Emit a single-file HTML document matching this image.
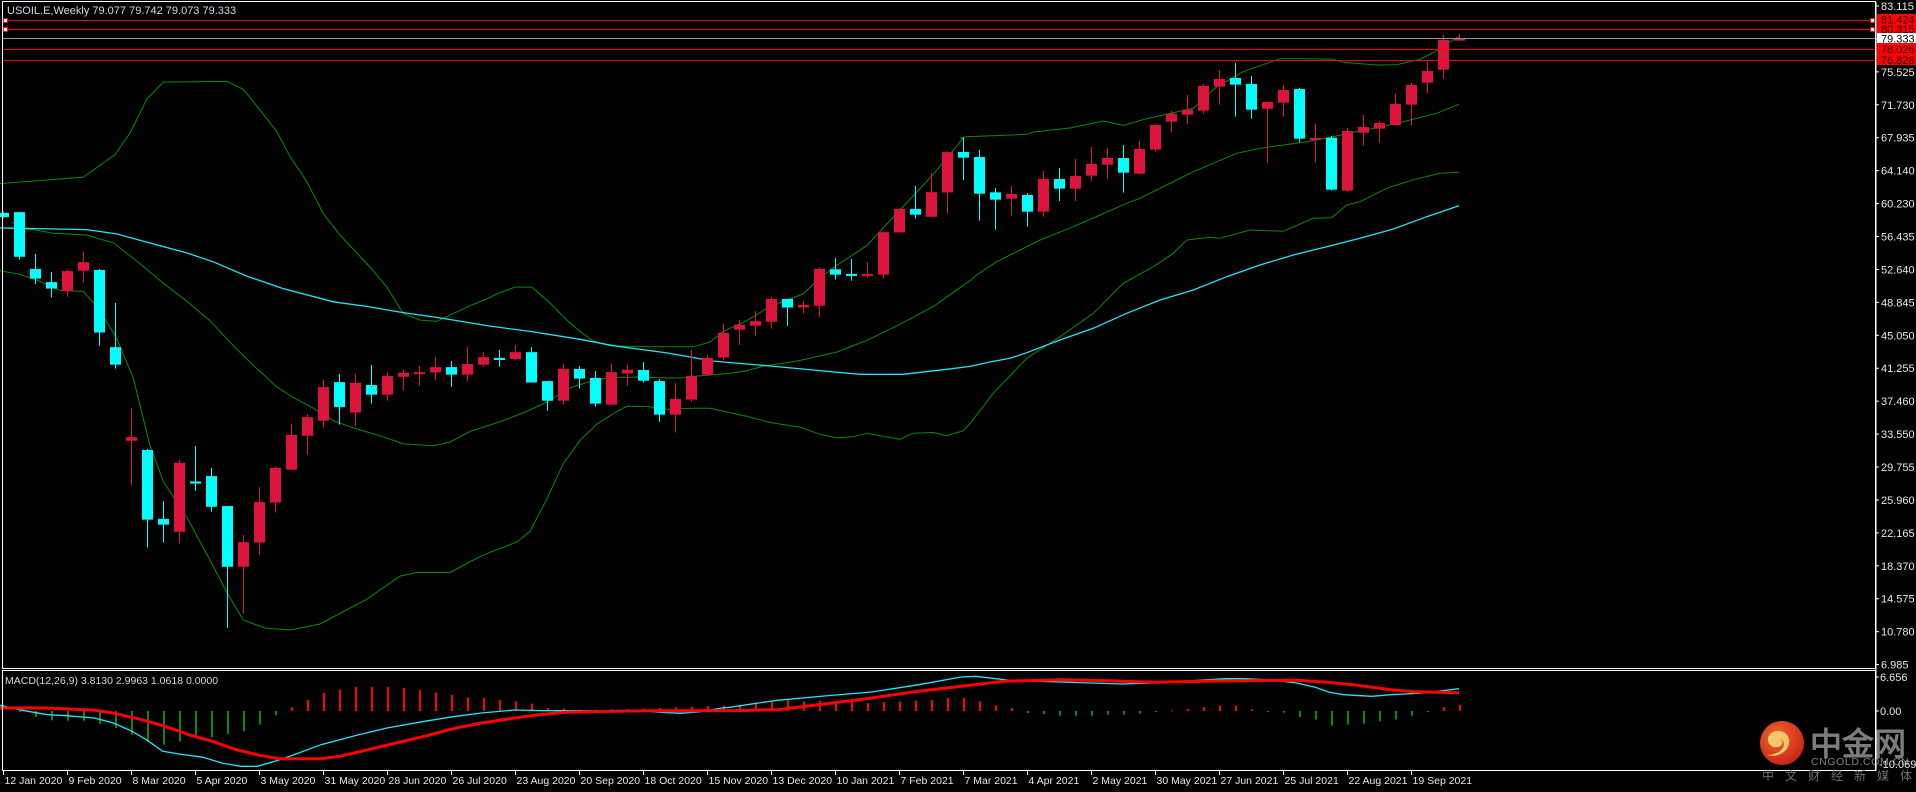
<!DOCTYPE html>
<html><head><meta charset="utf-8"><style>
html,body{margin:0;padding:0;background:#000;width:1916px;height:792px;overflow:hidden}
svg{display:block}
text{font-family:"Liberation Sans",sans-serif}
</style></head><body>
<svg id="s" width="1916" height="792" viewBox="0 0 1916 792" xmlns="http://www.w3.org/2000/svg">
<rect width="1916" height="792" fill="#000"/>
<g id="g"></g>
<rect x="2.5" y="1.5" width="1873" height="667" fill="none" stroke="#fff" stroke-width="1"/>
<rect x="2.5" y="670.5" width="1873" height="100" fill="none" stroke="#fff" stroke-width="1"/>
<line x1="3" y1="20.5" x2="1875" y2="20.5" stroke="#f00"/>
<line x1="3" y1="29.5" x2="1875" y2="29.5" stroke="#f00"/>
<line x1="3" y1="38.5" x2="1875" y2="38.5" stroke="#8a96a4"/>
<line x1="3" y1="49.5" x2="1875" y2="49.5" stroke="#f00"/>
<line x1="3" y1="60.5" x2="1875" y2="60.5" stroke="#f00"/>
<rect x="3.5" y="18.5" width="4" height="4" fill="#fff" stroke="#f00"/>
<rect x="3.5" y="27.5" width="4" height="4" fill="#fff" stroke="#f00"/>
<rect x="1870.5" y="18.5" width="4" height="4" fill="#fff" stroke="#f00"/>
<rect x="1870.5" y="27.5" width="4" height="4" fill="#fff" stroke="#f00"/>
<text x="7" y="14" font-size="11" fill="#d0d8e0">USOIL.E,Weekly  79.077 79.742 79.073 79.333</text>
<text x="5" y="684" font-size="10.5" fill="#d0d8e0">MACD(12,26,9) 3.8130 2.9963 1.0618 0.0000</text>
<g id="axis" font-size="11" fill="#e8e8e8"></g>
<rect x="1877" y="14" width="39" height="11" fill="#f00"/>
<text x="1881" y="23.5" font-size="11" fill="#200">81.424</text>
<rect x="1877" y="24" width="39" height="11" fill="#f00"/>
<text x="1881" y="33" font-size="11" fill="#200">80.315</text>
<rect x="1877" y="33" width="39" height="11" fill="#fff"/>
<text x="1881" y="42.5" font-size="11" fill="#000">79.333</text>
<rect x="1877" y="43" width="39" height="22" fill="#f00"/>
<text x="1881" y="53" font-size="11" fill="#200">78.026</text>
<text x="1881" y="64" font-size="11" fill="#200">76.828</text>
<line x1="1876" y1="677" x2="1879" y2="677" stroke="#fff"/>
<line x1="1876" y1="711" x2="1879" y2="711" stroke="#fff"/>
<text x="1880" y="681" font-size="11" fill="#e8e8e8">6.656</text>
<text x="1880" y="715" font-size="11" fill="#e8e8e8">0.00</text>
<defs><radialGradient id="lg" cx="0.4" cy="0.35" r="0.7"><stop offset="0" stop-color="#f36a2a"/><stop offset="1" stop-color="#c8201a"/></radialGradient></defs>
<circle cx="1782" cy="743" r="22" fill="url(#lg)"/>
<path d="M1778 731c-7 0-11 5-10 10 1 5 6 7 10 6 4-1 5-4 4-6-1-2-4-2-5 0 2-3 7-2 7 3 0 6-8 11-17 11 8 3 21-2 22-12 1-7-4-12-11-12z" fill="#f4c86a"/>
<text x="1810" y="755" font-size="32" font-weight="bold" fill="#7c7c7c" font-family="'Liberation Sans','Noto Sans CJK SC',sans-serif">中金网</text>
<text x="1811" y="765" font-size="10.5" fill="#808080" letter-spacing="0.6">CNGOLD.COM.CN</text>
<text x="1879" y="768" font-size="11" fill="#e8e8e8">-10.0699</text>
<text x="1762" y="780" font-size="12" fill="#707070" letter-spacing="11" font-family="'Liberation Sans','Noto Sans CJK SC',sans-serif">中文财经新媒体</text>
<g id="dates" font-size="10.5" fill="#e8e8e8"></g>
</svg>
<script>
var NS="http://www.w3.org/2000/svg",G=document.getElementById('g');
function el(t,a,p){var e=document.createElementNS(NS,t);for(var k in a)e.setAttribute(k,a[k]);(p||G).appendChild(e);return e;}
var AX=document.getElementById('axis');
var vals=["83.115","79.320","75.525","71.730","67.935","64.140","60.230","56.435","52.640","48.845","45.050","41.255","37.460","33.550","29.755","25.960","22.165","18.370","14.575","10.780","6.985"];
el('line',{x1:1876,y1:2,x2:1876,y2:771,stroke:'#fff'},document.getElementById('s'));
for(var k=0;k<vals.length;k++){var y=6+k*32.93;
 el('line',{x1:1876,y1:y,x2:1879,y2:y,stroke:'#fff'},AX);
 if(k==1)continue;
 var t=el('text',{x:1881,y:y+4},AX);t.textContent=vals[k];}
var D=["12 Jan 2020","9 Feb 2020","8 Mar 2020","5 Apr 2020","3 May 2020","31 May 2020","28 Jun 2020","26 Jul 2020","23 Aug 2020","20 Sep 2020","18 Oct 2020","15 Nov 2020","13 Dec 2020","10 Jan 2021","7 Feb 2021","7 Mar 2021","4 Apr 2021","2 May 2021","30 May 2021","27 Jun 2021","25 Jul 2021","22 Aug 2021","19 Sep 2021"];
var DG=document.getElementById('dates');
for(var k=0;k<D.length;k++){var x=3.5+64*k;el('line',{x1:x,y1:771,x2:x,y2:775,stroke:'#fff'},DG);var t=el('text',{x:x+1,y:784},DG);t.textContent=D[k];}
function line(pts,col,w){var d=pts.map(function(p,i){return (i?'L':'M')+p[0].toFixed(1)+' '+p[1].toFixed(1)}).join('');el('path',{d:d,fill:'none',stroke:col,'stroke-width':w});}
function z4(a){return a.map(function(p){return [p[0]/3,60+p[1]/2.8]})}
function z5(a){return a.map(function(p){return [480+p[0]/3,60+p[1]/2.8]})}
function z6(a){return a.map(function(p){return [960+p[0]/3,30+p[1]/3]})}
function z7(a){return a.map(function(p){return [p[0]/2.119,668+p[1]/3]})}
function z8(a){return a.map(function(p){return [730+p[0]/2.119,668+p[1]/3]})}
var GR='#0a8a0a',CY='#22e6f2';
line(z4([[0,346],[250,328],[345,265],[390,205],[440,110],[490,62],[680,60],[730,82],[780,140],[830,200],[870,270],[920,340],[970,430],[1020,490],[1110,580],[1160,635],[1210,710],[1260,728],[1310,732],[1360,710],[1410,688],[1470,665]]).concat(z5([[50,655],[105,636],[155,636],[210,680],[260,728],[300,760],[340,787],[390,800],[500,803],[640,803],[690,790],[730,760],[800,730],[870,690],[970,655],[1020,610],[1070,575],[1160,520],[1210,470],[1260,420],[1310,370],[1360,320],[1400,275],[1450,218]])).concat(z6([[0,325],[20,320],[200,313],[220,306],[330,294],[430,273],[490,286],[560,266],[700,235],[770,170],[850,125],[960,86],[1040,86],[1120,88],[1150,97],[1250,105],[1310,104],[1380,88],[1430,62],[1470,35],[1497,20]])),GR,1);
line(z4([[0,470],[100,475],[160,485],[260,490],[340,512],[420,570],[490,625],[560,675],[630,730],[700,800],[760,855],[830,915],[880,945],[940,975],[1000,1010],[1060,1030],[1150,1055],[1210,1075],[1300,1080],[1350,1070],[1410,1040],[1470,1022]]).concat(z5([[60,1013],[110,995],[150,980],[200,958],[270,918],[340,897],[390,889],[470,888],[560,890],[610,890],[650,885],[750,877],[800,870],[850,857],[950,843],[1070,818],[1160,785],[1260,740],[1360,690],[1470,618]])).concat(z6([[50,735],[110,695],[140,680],[240,630],[340,590],[420,555],[500,520],[540,505],[650,450],[700,425],[830,370],[900,355],[1040,335],[1120,320],[1200,302],[1260,292],[1350,270],[1430,250],[1497,223]])),GR,1);
line(z4([[0,590],[60,600],[120,620],[180,645],[250,648],[300,700],[350,780],[400,890],[450,1080],[490,1180],[560,1280],[630,1400],[680,1490],[730,1568]]).concat([[265,628],[290,630],[320,624]]).concat(z4([[1100,1510],[1200,1445],[1250,1435],[1350,1435],[1420,1400],[1470,1378]])).concat(z5([[40,1375],[110,1350],[150,1320],[200,1230],[250,1130],[300,1065],[350,1020],[400,990],[440,970],[500,970],[560,978],[640,975],[690,975],[800,998],[870,1015],[960,1028],[1020,1048],[1070,1058],[1120,1055],[1160,1045],[1260,1062],[1300,1045],[1360,1043],[1400,1052],[1450,1038],[1470,1018]])).concat(z6([[100,1090],[200,985],[300,920],[400,850],[490,760],[580,710],[640,670],[680,630],[750,622],[780,625],[870,600],[970,604],[1060,565],[1115,563],[1160,525],[1200,515],[1280,475],[1350,452],[1440,430],[1497,427]])),GR,1);
line(z4([[0,470],[260,475],[350,487],[440,510],[560,540],[640,565],[740,605],[850,640],[1000,677],[1100,690],[1200,706],[1320,722],[1470,745]]).concat(z5([[150,760],[300,782],[400,800],[560,820],[700,843],[850,855],[1000,868],[1140,880],[1270,880],[1400,866],[1470,858]])).concat(z6([[90,996],[150,985],[200,968],[300,930],[400,895],[500,850],[600,810],[700,780],[800,740],[900,705],[1000,675],[1100,650],[1200,625],[1300,597],[1400,560],[1497,527]])),CY,1.3);
var A=[[428,440,425,442,'c'],[426,551,426,559,'c'],[585,612,543,627,'c'],[622,640,594,665,'c'],[591,647,588,663,'r'],[566,590,538,623,'r'],[588,763,585,800,'c'],[804,853,680,864,'c'],[1056,1066,974,1192,'r'],[1092,1287,1089,1365,'c'],[1285,1301,1235,1351,'c'],[1128,1321,1120,1354,'r'],[1180,1186,1081,1206,'c'],[1165,1251,1142,1265,'c'],[1249,1419,1249,1590,'c'],[1350,1419,1330,1550,'r'],[1238,1351,1196,1385,'r'],[1142,1239,1138,1267,'r'],[1050,1147,1019,1147,'r'],[1000,1052,992,1105,'r'],[916,1010,896,1029,'r'],[902,972,879,1021,'c'],[904,987,879,1025,'r'],[910,937,854,962,'c'],[885,937,874,954,'r'],[876,887,865,926,'r'],[874,879,857,912,'r'],[860,875,832,895,'r'],[860,881,843,915,'c'],[851,881,804,901,'r'],[832,853,818,859,'r'],
[834,840,812,859,'c'],[818,837,798,840,'r'],[818,903,804,903,'c'],[899,954,899,982,'c'],[865,954,851,965,'r'],[865,892,857,920,'c'],[890,962,871,971,'c'],[874,965,851,965,'r'],[867,878,853,912,'r'],[868,898,846,903,'c'],[899,993,893,1013,'c'],[949,993,904,1043,'r'],[885,951,812,957,'r'],[834,881,826,885,'r'],[764,833,739,840,'r'],[741,755,728,798,'r'],[731,744,703,773,'r'],[669,733,663,752,'r'],[669,693,669,745,'c'],[686,693,675,710,'r'],[585,688,581,720,'r'],[586,601,554,615,'c'],[599,604,557,618,'c'],[599,604,566,609,'r'],[482,601,480,612,'r'],[417,483,414,483,'r'],[417,433,353,444,'c'],[370,439,316,439,'r'],[258,371,256,430,'r']];
var C=[[366,383,322,450,'c'],[381,491,360,572,'c'],[487,509,474,599,'c'],[492,506,468,557,'r'],[495,545,489,590,'c'],[447,545,423,560,'r'],[447,476,414,513,'c'],[438,476,387,513,'r'],[402,437,351,455,'r'],[384,404,354,446,'r'],[384,428,345,488,'c'],[357,431,333,434,'r'],[285,359,285,365,'r'],[251,275,243,305,'r'],[239,254,195,281,'r'],[168,242,162,251,'r'],[147,170,120,224,'r'],[144,164,99,260,'c'],[162,239,138,266,'c'],[216,236,216,398,'r'],[180,218,165,260,'r'],[177,326,174,337,'c'],[324,328,282,398,'r'],[323,479,318,482,'c'],[303,482,294,485,'r'],[291,308,255,347,'r'],[279,296,273,338,'r'],[222,285,192,285,'r'],[165,224,159,287,'r'],[123,158,96,191,'r'],[30,119,15,146,'r'],[25,32,12,32,'r']];
function cd(i,bt,bb,wt,wb,c){var x=Math.round(3.3+16*i);var col=c=='c'?'#00ffff':'#dc143c';
 el('rect',{x:x,y:wt,width:1,height:Math.max(1,wb-wt),fill:col});
 el('rect',{x:x-5,y:bt,width:11,height:Math.max(2,bb-bt),fill:col});}
A.forEach(function(a,i){var f=function(v){return 60+v/2.8};cd(i,f(a[0]),f(a[1]),f(a[2]),f(a[3]),a[4]);});
C.forEach(function(a,j){var f=function(v){return 30+v/3};cd(60+j,f(a[0]),f(a[1]),f(a[2]),f(a[3]),a[4]);});
var H=[];
[132,147,157,158,158,168,180,200,218,230,220,212,207,198,190,170,142].forEach(function(v,k){H.push([1+k,v])});
[118,96,75,65,57,57,57,60,66,73,81,88,90,96,100,107,120,122,125].forEach(function(v,k){H.push([18+k,v])});
[125,124,123,122,120,118,116,114,113].forEach(function(v,k){H.push([37+k,v])});
[112,105,100,95,100,98,98,95,105,102,100,98,96,90,90,100,112,120].forEach(function(v,k){H.push([46+k,v])});
[135,138,143,143,143,140,140,137,132,127,123,117,113,113,124,130,134,147,155,173,170,167,160,155,143,132,117,110].forEach(function(v,k){H.push([64+k,v])});
H.forEach(function(h){var x=Math.round(3.3+16*h[0]);var y=668+h[1]/3,b=711;var col=y<b?'#ff0000':'#0a8a0a';
 el('rect',{x:x,y:Math.min(y,b),width:2,height:Math.max(1,Math.abs(y-b)),fill:col});});
line(z7([[0,112],[10,115],[40,125],[100,140],[140,143],[200,150],[240,165],[280,190],[310,215],[345,250],[380,258],[430,268],[470,285],[510,295],[545,295],[590,277],[620,262],[680,230],[760,200],[820,180],[900,160],[960,146],[1020,135],[1090,126],[1150,128],[1230,128],[1300,130],[1350,127],[1400,133],[1440,136],[1480,132],[1530,120]]).concat(z8([[0,118],[50,107],[100,97],[200,84],[300,72],[400,50],[490,27],[520,25],[600,38],[700,42],[830,48],[900,45],[1000,36],[1050,32],[1090,32],[1150,36],[1200,45],[1240,58],[1270,73],[1300,80],[1360,85],[1400,80],[1470,75],[1545,62]])),CY,1.3);
line(z7([[0,120],[100,120],[200,127],[240,135],[300,155],[350,175],[400,200],[450,220],[500,245],[550,262],[590,272],[680,272],[720,265],[780,245],[830,228],[900,205],[960,182],[1020,165],[1080,152],[1140,140],[1200,133],[1300,130],[1380,128],[1540,128]]).concat(z8([[0,128],[100,125],[200,108],[300,90],[400,70],[500,53],[580,40],[700,35],[800,38],[900,43],[1000,40],[1100,38],[1200,37],[1260,42],[1320,50],[1400,65],[1450,71],[1545,74]])),'#ff0000',3);
</script>
</body></html>
